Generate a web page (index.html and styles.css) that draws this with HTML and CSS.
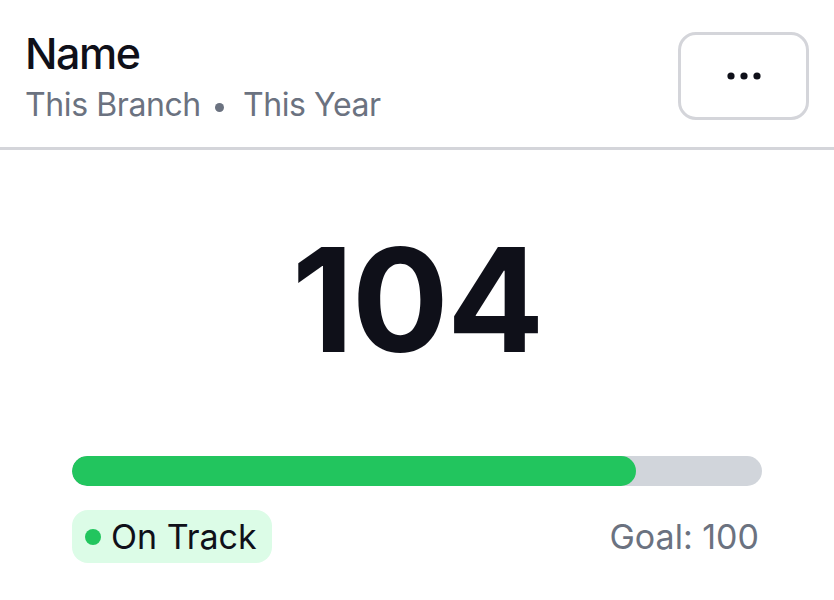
FILE: index.html
```html
<!DOCTYPE html>
<html lang="en">
  <head>
    <meta charset="utf-8" />
    <title>Goal Card</title>
    <link rel="stylesheet" href="styles.css">
  </head>
  <body>
    <div class="card">
      <div class="card-header">
        <div class="titles">
          <div class="title">Name</div>
          <div class="subtitle">
            <span>This Branch</span>
            <span class="sep"></span>
            <span>This Year</span>
          </div>
        </div>
        <button class="menu-btn" type="button" aria-label="More">
          <svg width="36" height="10" viewBox="0 0 36 10">
            <circle cx="5" cy="5" r="3.6" fill="#0f1019" />
            <circle cx="18" cy="5" r="3.6" fill="#0f1019" />
            <circle cx="31" cy="5" r="3.6" fill="#0f1019" />
          </svg>
        </button>
      </div>

      <div class="card-body">
        <div class="value">104</div>
        <div class="progress">
          <div class="progress-fill" style="width: 81.7%"></div>
        </div>
        <div class="footer">
          <span class="badge"><span class="dot"></span>On Track</span>
          <span class="goal">Goal: 100</span>
        </div>
      </div>
    </div>
  </body>
</html>
```

FILE: styles.css
```css
body {
  margin: 0;
  background: #fff;
  font-family: Inter, "Noto Sans", sans-serif;
  color: #0f1019;
}

.card {
  width: 834px;
  height: 600px;
  background: #fff;
}

.card-header {
  display: flex;
  justify-content: space-between;
  align-items: center;
  padding: 27px 25px 22px 25px;
  border-bottom: 3px solid #d4d5da;
}

.title {
  font-size: 43px;
  line-height: 53px;
  font-weight: 500;
  letter-spacing: -1.5px;
}

.subtitle {
  display: flex;
  align-items: center;
  margin-top: 5px;
  font-size: 32px;
  line-height: 40px;
  letter-spacing: -0.4px;
  color: #6b7280;
}

.sep {
  width: 9px;
  height: 9px;
  border-radius: 50%;
  background: #6b7280;
  margin: 4px 19px 0 14px;
}

.menu-btn {
  width: 131px;
  height: 88px;
  border: 3px solid #d4d5da;
  border-radius: 18px;
  background: #fff;
  display: flex;
  align-items: center;
  justify-content: center;
  padding: 0;
}

.card-body {
  padding: 78px 72px 0 72px;
}

.value {
  text-align: center;
  font-size: 144px;
  line-height: 144px;
  font-weight: 700;
  letter-spacing: -2px;
}

.progress {
  margin-top: 84px;
  height: 30px;
  border-radius: 15px;
  background: #d1d5db;
  overflow: hidden;
}

.progress-fill {
  height: 100%;
  border-radius: 15px;
  background: #22c55e;
}

.footer {
  display: flex;
  justify-content: space-between;
  align-items: center;
  margin-top: 24px;
}

.badge {
  display: inline-flex;
  align-items: center;
  gap: 10px;
  padding: 6px 15px 6px 13px;
  border-radius: 16px;
  background: #dcfce7;
  font-size: 34px;
  line-height: 41px;
}

.dot {
  width: 16px;
  height: 16px;
  border-radius: 50%;
  background: #22c55e;
}

.goal {
  font-size: 34px;
  line-height: 41px;
  color: #6b7280;
  margin-right: 3px;
}
```
